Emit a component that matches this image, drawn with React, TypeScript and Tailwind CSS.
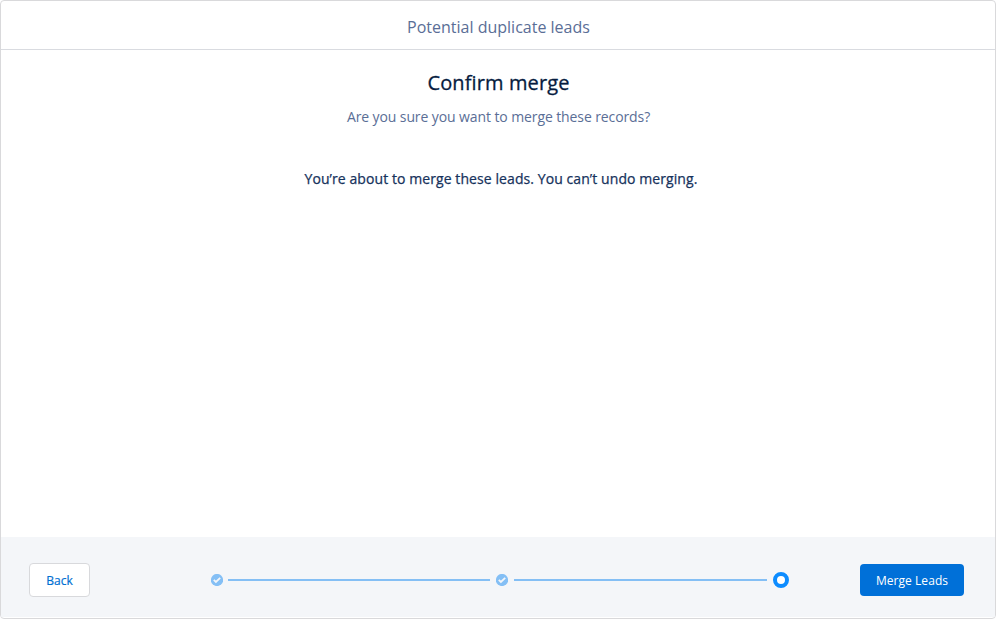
function CompletedStep() {
  return (
    <svg className="size-3 shrink-0" viewBox="0 0 12 12" aria-label="Completed">
      <circle cx="6" cy="6" r="6.1" fill="#84bff5" />
      <path d="M2.8 5.9l2.1 2.1 4.3-4.1" fill="none" stroke="#f4f6f9" strokeWidth="1.8" />
    </svg>
  );
}

function CurrentStep() {
  return <div className="size-4 shrink-0 rounded-full border-4 border-[#0d8cff] bg-white" />;
}

export default function App() {
  return (
    <div className="flex h-[619px] w-[996px] flex-col overflow-hidden rounded border border-[#d9d9db] bg-white pb-px font-['Open_Sans','Noto_Sans',sans-serif]">
      <header className="flex h-[49px] shrink-0 items-center justify-center border-b border-[#d9dbe0] pt-1 pl-px">
        <span className="text-base whitespace-nowrap text-[#5a6e96]">Potential duplicate leads</span>
      </header>
      <main className="flex flex-1 flex-col items-center pt-[19px]">
        <h1 className="ml-px text-[20px] leading-7 font-medium tracking-[0.12px] text-[#061c3f] [-webkit-text-stroke:0.3px_#061c3f]">
          Confirm merge
        </h1>
        <p className="mt-[10px] ml-px text-[14px] leading-5 tracking-[-0.1px] text-[#5a6e96]">
          Are you sure you want to merge these records?
        </p>
        <p className="mt-[42px] ml-[6px] text-[14px] leading-5 font-medium tracking-[0.08px] text-[#16325c] [-webkit-text-stroke:0.25px_#16325c]">
          You’re about to merge these leads. You can’t undo merging.
        </p>
      </main>
      <footer className="flex h-20 shrink-0 items-center bg-[#f4f6f9] pt-1.5 pr-[31px] pl-7">
        <button className="h-[34px] w-[61px] rounded border border-[#d8d9dc] bg-white pt-px text-[12px] text-[#0070d2] [-webkit-text-stroke:0.2px_#0070d2]">
          Back
        </button>
        <div className="ml-[121px] flex items-center">
          <CompletedStep />
          <div className="mr-[6px] ml-[5px] h-[2px] w-[262px] bg-[#84bff5]" />
          <CompletedStep />
          <div className="mx-[6px] h-[2px] w-[253px] bg-[#84bff5]" />
          <CurrentStep />
        </div>
        <button className="ml-auto h-8 w-[104px] rounded bg-[#0070d8] pt-px text-[12px] tracking-[0.05px] text-white">
          Merge Leads
        </button>
      </footer>
    </div>
  );
}
